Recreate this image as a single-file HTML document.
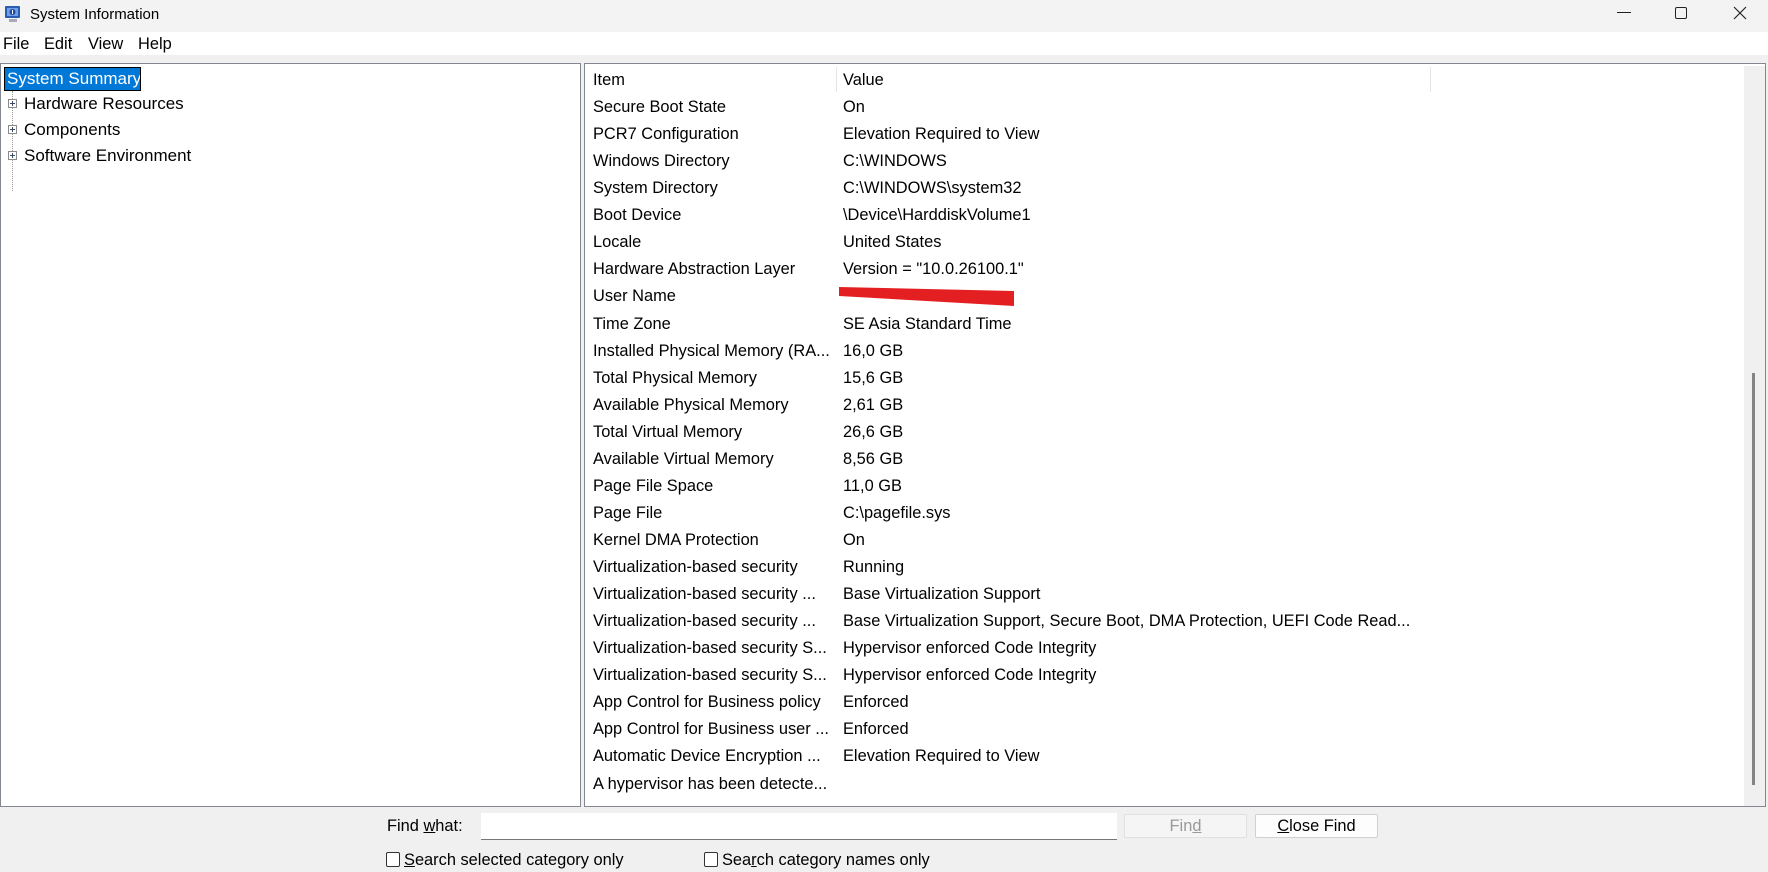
<!DOCTYPE html>
<html><head><meta charset="utf-8"><style>
*{margin:0;padding:0;box-sizing:border-box}
body{width:1768px;height:872px;background:#f0f0f0;font-family:"Liberation Sans",sans-serif;font-size:16.4px;color:#000;position:relative;overflow:hidden}
.abs{position:absolute;white-space:nowrap}
#title{left:0;top:0;width:1768px;height:32px;background:#f3f3f3}
#menu{left:0;top:32px;width:1768px;height:23px;background:#fff}
#left{left:0;top:63px;width:581px;height:744px;background:#fff;border:1px solid #828790}
#right{left:584px;top:63px;width:1182px;height:744px;background:#fff;border:1px solid #828790}
.row{position:absolute;left:8px;height:27px;line-height:27px;white-space:nowrap}
.v{position:absolute;left:258px;height:27px;line-height:27px;white-space:nowrap}
.plus{position:absolute;left:7px;width:9px;height:9px;border:1px solid #8a8a8a;background:#fff}
.plus:before{content:"";position:absolute;left:1px;top:3px;width:5px;height:1px;background:#3a4a6a}
.plus:after{content:"";position:absolute;left:3px;top:1px;width:1px;height:5px;background:#3a4a6a}
.btn{position:absolute;height:24px;border:1px solid #d0d0d0;background:#fdfdfd;text-align:center;line-height:22px;border-radius:2px}
.cb{position:absolute;width:14px;height:15px;border:1px solid #333;border-radius:2px;background:#fff}
</style></head><body>
<div id="title" class="abs">
<svg class="abs" style="left:4px;top:4px" width="18" height="20" viewBox="0 0 18 20"><rect x="1" y="2" width="15" height="12" rx="1" fill="#2a5db0"/><rect x="3" y="4" width="11" height="8" fill="#6fa0e8"/><circle cx="8.5" cy="8" r="3" fill="#1e4a9a"/><rect x="8" y="6" width="1" height="4" fill="#fff"/><rect x="5" y="15" width="8" height="3" fill="#aab"/></svg>
<div class="abs" style="left:30px;top:6px;font-size:15px">System Information</div>
<div class="abs" style="left:1617px;top:12px;width:14px;height:1px;background:#222"></div>
<div class="abs" style="left:1675px;top:7px;width:12px;height:12px;border:1px solid #222;border-radius:2px"></div>
<svg class="abs" style="left:1733px;top:6px" width="14" height="14"><path d="M1 1L13 13M13 1L1 13" stroke="#222" stroke-width="1.2"/></svg>
</div>
<div id="menu" class="abs">
<span class="abs" style="left:3px;top:3px">File</span>
<span class="abs" style="left:44px;top:3px">Edit</span>
<span class="abs" style="left:88px;top:3px">View</span>
<span class="abs" style="left:138px;top:3px">Help</span>
</div>
<div id="left" class="abs">
<div class="abs" style="left:3px;top:3px;width:137px;height:24px;background:#0078d7;border:1px solid #000;color:#fff;line-height:21px;padding-left:2px;font-size:17px;overflow:hidden">System Summary</div>
<div class="abs" style="left:11px;top:27px;width:0;height:100px;border-left:1px dotted #999"></div>
<div class="plus" style="top:35px"></div><div class="abs" style="left:23px;top:30px;font-size:17px">Hardware Resources</div>
<div class="plus" style="top:61px"></div><div class="abs" style="left:23px;top:56px;font-size:17px">Components</div>
<div class="plus" style="top:87px"></div><div class="abs" style="left:23px;top:82px;font-size:17px">Software Environment</div>
</div>
<div id="right" class="abs">
<div class="abs" style="left:251px;top:3px;width:1px;height:25px;background:#e5e5e5"></div>
<div class="abs" style="left:845px;top:3px;width:1px;height:25px;background:#e5e5e5"></div>
<div class="row" style="top:3px">Item</div><div class="v" style="top:3px">Value</div>
<div class="abs" style="left:1159px;top:2px;width:21px;height:740px;background:#f0f0f0"></div>
<div class="abs" style="left:1167px;top:309px;width:3px;height:412px;background:#858585"></div>
<div id="rows"></div>
<svg class="abs" style="left:254px;top:222px" width="180" height="24"><polygon points="0,1 175,5 175,20 0,10" fill="#e41f22"/></svg>
</div>
<div class="abs" style="left:387px;top:817px">Find <u>w</u>hat:</div>
<div class="abs" style="left:481px;top:813px;width:636px;height:27px;background:#fff;border-bottom:1px solid #777"></div>
<div class="btn" style="left:1124px;top:814px;width:123px;color:#999;border-color:#e0e0e0;background:#f5f5f5">Fin<u>d</u></div>
<div class="btn" style="left:1255px;top:814px;width:123px"><u>C</u>lose Find</div>
<div class="cb" style="left:386px;top:852px"></div><div class="abs" style="left:404px;top:851px"><u>S</u>earch selected category only</div>
<div class="cb" style="left:704px;top:852px"></div><div class="abs" style="left:722px;top:851px">Sea<u>r</u>ch category names only</div>
<script>
var d=[["Secure Boot State","On"],["PCR7 Configuration","Elevation Required to View"],["Windows Directory","C:\\WINDOWS"],["System Directory","C:\\WINDOWS\\system32"],["Boot Device","\\Device\\HarddiskVolume1"],["Locale","United States"],["Hardware Abstraction Layer","Version = \"10.0.26100.1\""],["User Name",""],["Time Zone","SE Asia Standard Time"],["Installed Physical Memory (RA...","16,0 GB"],["Total Physical Memory","15,6 GB"],["Available Physical Memory","2,61 GB"],["Total Virtual Memory","26,6 GB"],["Available Virtual Memory","8,56 GB"],["Page File Space","11,0 GB"],["Page File","C:\\pagefile.sys"],["Kernel DMA Protection","On"],["Virtualization-based security","Running"],["Virtualization-based security ...","Base Virtualization Support"],["Virtualization-based security ...","Base Virtualization Support, Secure Boot, DMA Protection, UEFI Code Read..."],["Virtualization-based security S...","Hypervisor enforced Code Integrity"],["Virtualization-based security S...","Hypervisor enforced Code Integrity"],["App Control for Business policy","Enforced"],["App Control for Business user ...","Enforced"],["Automatic Device Encryption ...","Elevation Required to View"],["A hypervisor has been detecte...",""]];
var h="";d.forEach(function(r,i){var t=(30+i*27.06).toFixed(1);var e=function(s){return s.replace(/&/g,"&amp;").replace(/</g,"&lt;")};h+='<div class="row" style="top:'+t+'px">'+e(r[0])+'</div><div class="v" style="top:'+t+'px">'+e(r[1])+'</div>';});
document.getElementById("rows").innerHTML=h;
</script>
</body></html>
